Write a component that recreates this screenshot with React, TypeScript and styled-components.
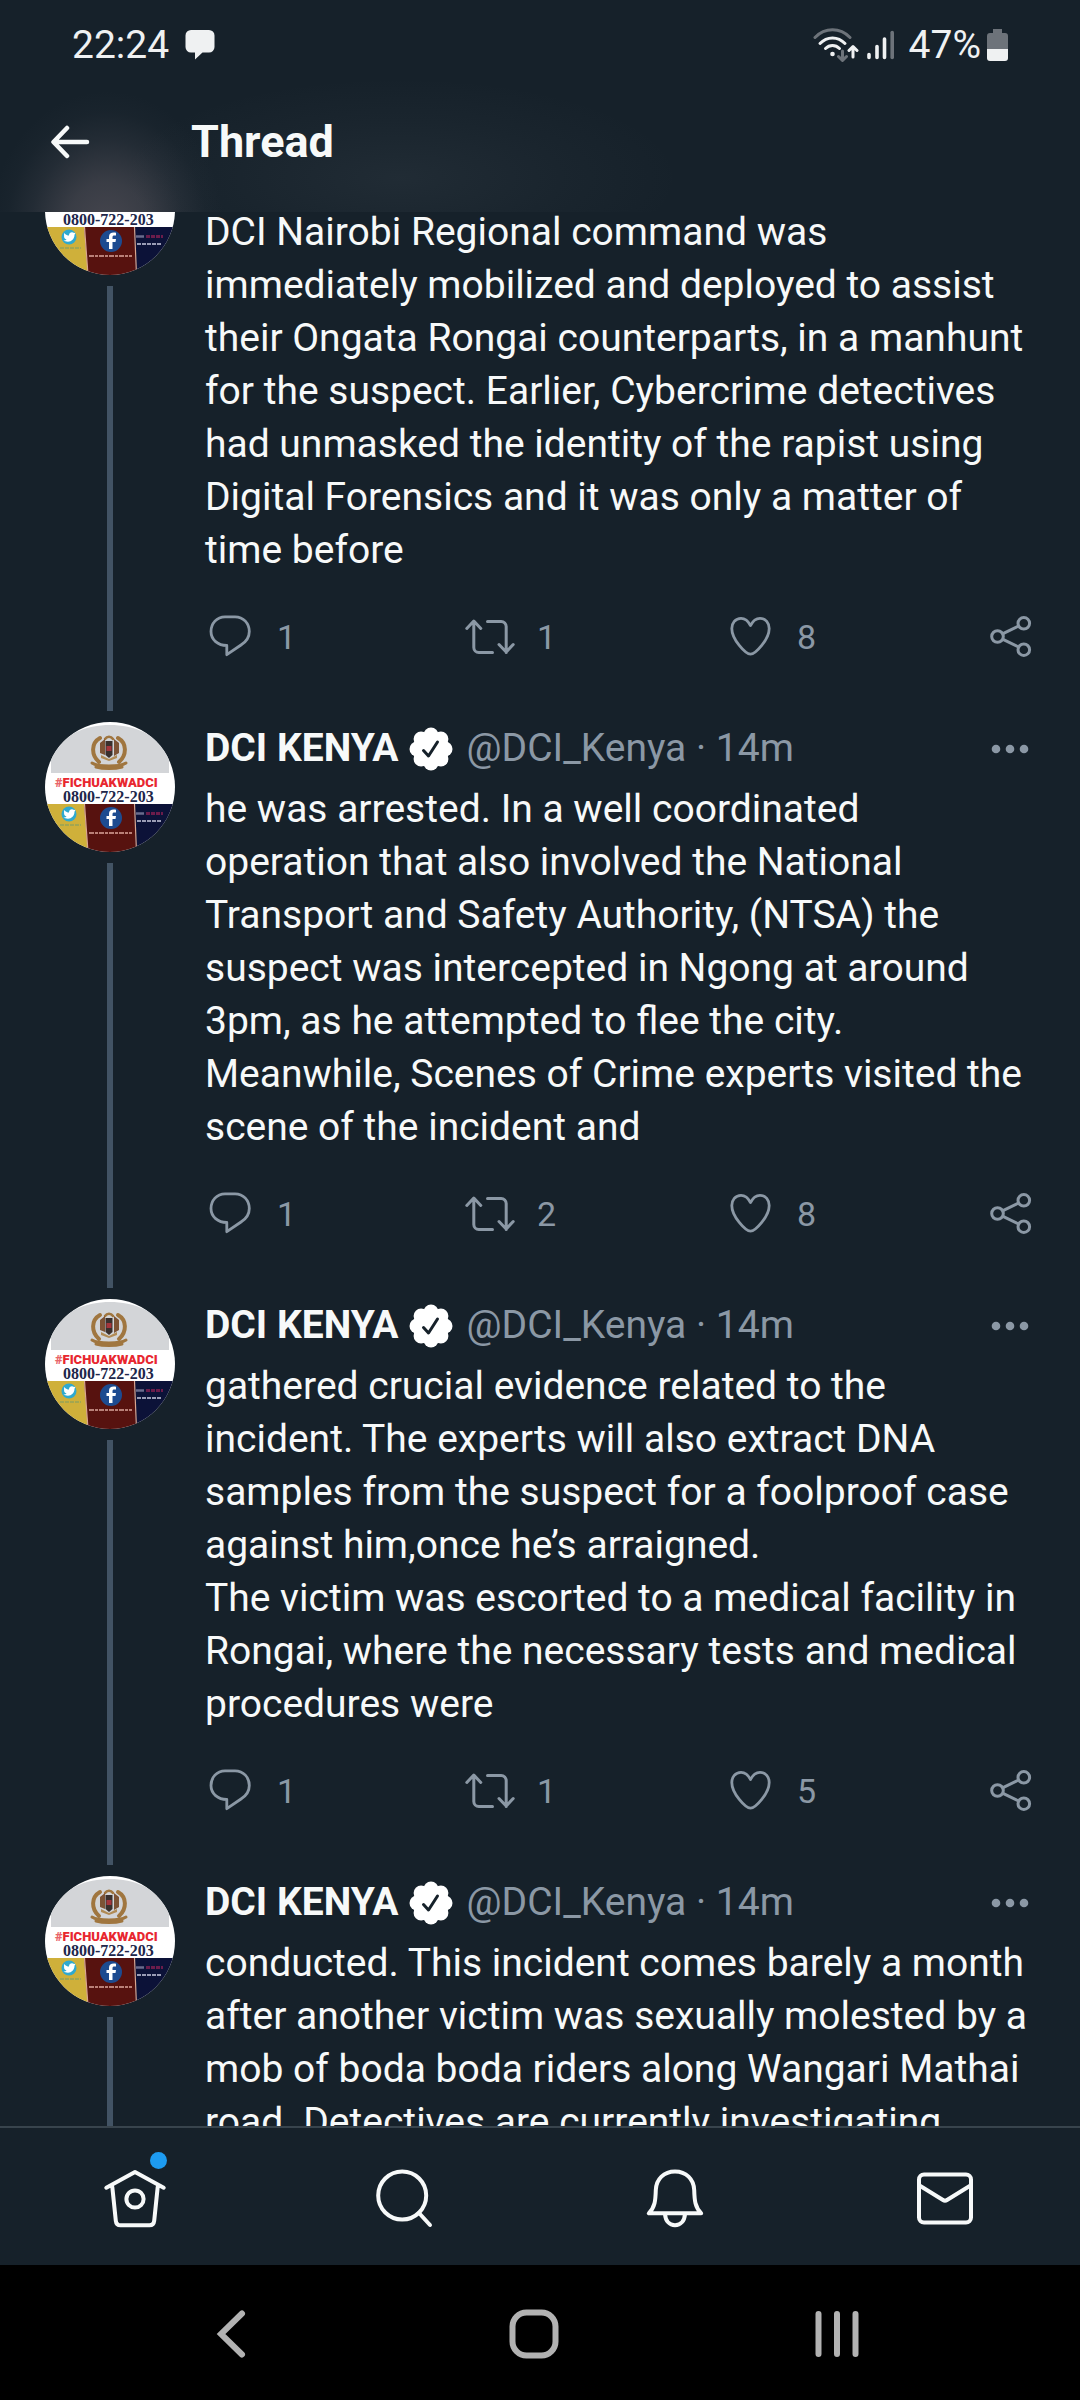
import React from "react";
import styled, { createGlobalStyle } from "styled-components";

const color = {
  bg: "#16212a",
  text: "#f7f9f9",
  muted: "#8b98a5",
  rail: "#425364",
  border: "#38444d",
  accent: "#1d9bf0",
  system: "#b2b2b2",
};

const GlobalStyle = createGlobalStyle`
  * { box-sizing: border-box; }
  body {
    margin: 0;
    background: ${color.bg};
    color: ${color.text};
    font-family: Roboto, "Noto Sans", sans-serif;
  }
  button { margin: 0; padding: 0; border: 0; background: none; color: inherit; font: inherit; cursor: pointer; }
  svg { display: block; flex: none; }
`;

const Screen = styled.div`
  display: flex;
  flex-direction: column;
  height: 100vh;
  overflow: hidden;
`;

const StatusBar = styled.div`
  display: flex;
  align-items: center;
  justify-content: space-between;
  flex: none;
  height: 73px;
  padding: 16px 72px 0;
  color: #eff1f2;
  font-size: 39px;
  line-height: 56px;
`;

const StatusGroup = styled.div<{ $gap: number }>`
  display: flex;
  align-items: center;
  gap: ${(p) => p.$gap}px;
`;

const Header = styled.header`
  display: flex;
  align-items: center;
  gap: 96px;
  flex: none;
  height: 139px;
  padding: 0 45px 2px;
  background:
    radial-gradient(
      ellipse 118px 140px at 107px 158px,
      rgba(125, 112, 120, 0.48),
      rgba(120, 110, 118, 0.36) 35%,
      rgba(110, 105, 115, 0.15) 65%,
      rgba(100, 100, 110, 0.04) 85%,
      transparent
    ),
    radial-gradient(ellipse 280px 100px at 400px 105px, rgba(140, 150, 160, 0.09), rgba(140, 150, 160, 0.03) 60%, transparent),
    ${color.bg};
`;

const Title = styled.h1`
  margin: 0;
  font-size: 45px;
  line-height: 56px;
  font-weight: 700;
`;

const Feed = styled.main`
  flex: 1;
  min-height: 0;
  overflow: hidden;
`;

/* The list is scrolled part of the way into its first post. */
const Posts = styled.div`
  margin-top: -78px;
`;

const Post = styled.article`
  display: flex;
  gap: 30px;
  padding: 11px 45px 0;
`;

const Side = styled.div`
  display: flex;
  flex-direction: column;
  align-items: center;
  gap: 11px;
  flex: none;
  width: 130px;
`;

const Rail = styled.div`
  flex: 1;
  width: 6px;
  background: ${color.rail};
`;

const Content = styled.div`
  flex: 1;
  min-width: 0;
`;

const Byline = styled.div`
  display: flex;
  align-items: center;
  height: 53px;
  font-size: 39px;
  line-height: 53px;
  white-space: nowrap;
`;

const Name = styled.span`
  font-weight: 700;
  margin-right: 10px;
`;

const Handle = styled.span`
  flex: 1;
  margin-left: 14px;
  color: ${color.muted};
`;

const IconButton = styled.button`
  display: flex;
  align-items: center;
  justify-content: center;
  flex: none;
  width: 50px;
  height: 50px;
`;

const MutedIconButton = styled(IconButton)`
  color: ${color.muted};
`;

const Body = styled.p`
  margin: 8px 0 0;
  padding-right: 6px;
  font-size: 39px;
  line-height: 53px;
  white-space: pre-line;
`;

const Actions = styled.div`
  display: flex;
  margin-top: 34px;
  padding-bottom: 50px;
  color: ${color.muted};
`;

const Slot = styled.div`
  flex: 1;
`;

const Action = styled.button`
  display: flex;
  align-items: center;
  gap: 22px;
  height: 50px;
`;

const Count = styled.span`
  padding-top: 2px;
  font-size: 34px;
  line-height: 40px;
`;

const Tabs = styled.nav`
  display: grid;
  grid-template-columns: repeat(4, 1fr);
  flex: none;
  height: 139px;
  border-top: 2px solid ${color.border};
`;

const Tab = styled.button`
  display: flex;
  align-items: center;
  justify-content: center;
`;

const TabIcon = styled.span`
  position: relative;
`;

const Dot = styled.span`
  position: absolute;
  top: -9px;
  right: 4px;
  width: 17px;
  height: 17px;
  border-radius: 50%;
  background: ${color.accent};
`;

const SystemBar = styled.div`
  display: grid;
  grid-template-columns: repeat(3, 1fr);
  flex: none;
  height: 135px;
  padding: 0 92px 0 79px;
  background: #000;
  color: ${color.system};
`;

const line = {
  fill: "none",
  stroke: "currentColor",
  strokeLinecap: "round",
  strokeLinejoin: "round",
} as const;

const MessageIcon = () => (
  <svg width="30" height="30" viewBox="0 0 30 30" fill="currentColor">
    <path d="M6 0h18a5.500 5.500 0 0 1 5.500 5.500v11.500a5.500 5.500 0 0 1-5.500 5.500h-6.500L10 29.500v-7H6A5.500 5.500 0 0 1 .5 17V5.500A5.500 5.500 0 0 1 6 0z" />
  </svg>
);

const WifiIcon = () => (
  <svg width="46" height="34" viewBox="0 0 46 34" {...line} strokeWidth="3">
    <path d="M2 9.500C12-.7 27-.7 37 9.500" opacity=".4" />
    <path d="M7 15.500c7-7.500 18-7.500 25 0M12.500 20.500c4-4 10-4 14 0" />
    <circle cx="19.500" cy="26" r="2.300" fill="currentColor" stroke="none" />
    <path d="M29.500 23v9M25.500 28.500l4 4 4-4" opacity=".4" />
    <path d="M40 29V20M36 22.500l4-4 4 4" />
  </svg>
);

const SignalIcon = () => (
  <svg width="28" height="30" viewBox="0 0 28 30" {...line} strokeWidth="3.600">
    <path d="M2 24.500v3M10 16.500v11M17.500 9v18.500" />
    <path d="M25.200 2.500v25" opacity=".4" />
  </svg>
);

const BatteryIcon = () => (
  <svg width="21" height="32" viewBox="0 0 21 32" fill="currentColor">
    <path d="M6 0h9v4h3a3 3 0 0 1 3 3v13H0V7a3 3 0 0 1 3-3h3z" opacity=".4" />
    <path d="M0 20h21v9a3 3 0 0 1-3 3H3a3 3 0 0 1-3-3z" />
  </svg>
);

const BackIcon = () => (
  <svg width="40" height="34" viewBox="0 0 40 34" {...line} strokeWidth="4.500">
    <path d="M37 17H4M17 3L3.500 17 17 31" />
  </svg>
);

const VerifiedIcon = () => (
  <svg width="44" height="44" viewBox="0 0 44 44">
    <g fill="#fff">
      <circle cx="22" cy="22" r="17" />
      {[0, 45, 90, 135, 180, 225, 270, 315].map((a) => (
        <circle key={a} cx="22" cy="8" r="7.500" transform={`rotate(${a} 22 22)`} />
      ))}
    </g>
    <path d="M14.500 23.500l5 5.500 9-14" {...line} stroke={color.bg} strokeWidth="3" />
  </svg>
);

const MoreIcon = () => (
  <svg width="50" height="50" viewBox="0 0 50 50" fill="currentColor">
    <circle cx="11" cy="25" r="4.300" />
    <circle cx="25" cy="25" r="4.300" />
    <circle cx="39" cy="25" r="4.300" />
  </svg>
);

const ReplyIcon = () => (
  <svg width="50" height="50" viewBox="0 0 50 50" {...line} strokeWidth="2.800">
    <path d="M20 5.800h10c8.500 0 14.300 6.700 14.300 14.700 0 5.700-3 10.200-8.300 13.500L21.800 43.700V34.500c-8.800 0-15.800-5.800-15.800-14 0-8 5.800-14.700 14-14.700z" />
  </svg>
);

const RetweetIcon = () => (
  <svg width="50" height="50" viewBox="0 0 50 50" {...line} strokeWidth="3">
    <path d="M1.800 17.500L8.800 10l7 7.500M8.800 10.500v26a5 5 0 0 0 5 5H27.500" />
    <path d="M22.500 10.500h13.700a5 5 0 0 1 5 5v26M34 33.500l7.200 7.500 7-7.500" />
  </svg>
);

const LikeIcon = () => (
  <svg width="50" height="50" viewBox="0 0 50 50" {...line} strokeWidth="2.800">
    <path d="M25.500 14.500C23 9.500 19.800 7.300 16 7.300c-5.700 0-9.200 4.700-9.200 10.200 0 11 13.700 25.700 18.700 25.700s18.700-14.700 18.700-25.700c0-5.500-3.500-10.200-9.200-10.200-3.800 0-7 2.200-9.500 7.200z" />
  </svg>
);

const ShareIcon = () => (
  <svg width="50" height="50" viewBox="0 0 50 50" {...line} strokeWidth="3">
    <circle cx="12.500" cy="25.500" r="5.800" />
    <circle cx="38.800" cy="12.300" r="5.800" />
    <circle cx="38.800" cy="38.700" r="5.800" />
    <path d="M18 22.700l15.500-7.700M18 28.300l15.500 7.700" />
  </svg>
);

const tabIcon = { width: 72, height: 72, viewBox: "0 0 72 72", ...line, strokeWidth: 4 };

const HomeIcon = () => (
  <svg {...tabIcon}>
    <path d="M7.300 26.700L36 11l28.700 15.700M13.300 26l3.500 33.700c.3 3 2 4.600 4.700 4.600h29c2.700 0 4.400-1.600 4.700-4.600L58.700 26" />
    <circle cx="36" cy="38" r="8.600" />
  </svg>
);

const SearchIcon = () => (
  <svg {...tabIcon}>
    <circle cx="33.200" cy="34.500" r="24" />
    <path d="M50 52l11 12" />
  </svg>
);

const BellIcon = () => (
  <svg {...tabIcon}>
    <path d="M36 10.500c-11 0-18.800 7.500-19.200 18.500-.3 10.500-.8 17-7 23.300h52.400c-6.200-6.300-6.700-12.800-7-23.300C54.800 18 47 10.500 36 10.500z" />
    <path d="M26 53c.5 7 4.500 11.300 10 11.300S45.500 60 46 53" />
  </svg>
);

const MailIcon = () => (
  <svg {...tabIcon}>
    <rect x="10" y="13.500" width="52" height="48" rx="5" />
    <path d="M10.500 24.500L34 39q2 1.300 4 0l23.500-14.500" />
  </svg>
);

const systemIcon = { width: 60, height: 60, viewBox: "0 0 60 60", ...line, strokeWidth: 6 };

const SystemBack = () => (
  <svg {...systemIcon}>
    <path d="M41 10.500L20 31l21 20.500" strokeLinejoin="miter" />
  </svg>
);

const SystemHome = () => (
  <svg {...systemIcon}>
    <rect x="8.500" y="9.500" width="43" height="43" rx="14" />
  </svg>
);

const SystemRecents = () => (
  <svg {...systemIcon}>
    <path d="M11.500 11v40M30 11v40M48.500 11v40" />
  </svg>
);

const Avatar = ({ id, tagged }: { id: string; tagged: boolean }) => (
  <svg width="130" height="130" viewBox="0 0 130 130" role="img" aria-label="DCI Kenya">
    <clipPath id={id}>
      <circle cx="65" cy="65" r="65" />
    </clipPath>
    <g clipPath={`url(#${id})`}>
      <rect width="130" height="130" fill="#fff" />
      <path d="M6 51V36C15 12 42 3 65 3s50 9 59 33v15z" fill="#d3d5d8" />
      <g fill="none" stroke="#a0763f" strokeWidth="2.500" strokeLinecap="round">
        <path d="M55 16c-9 5-9 17-1 24M73 16c9 5 9 17 1 24" strokeWidth="4" />
        <path d="M47 41c6 4 28 4 34 0M51 45c7 2 19 2 26 0" strokeWidth="3" />
        <path d="M60 17c2-3 6-3 8 0" />
      </g>
      <path d="M55 21l5-4v16l-5-2zM69 17l5 4v10l-5 3z" fill="#7d5335" />
      <path d="M60.500 19h7v14l-3.500 3-3.500-3z" fill="#3a302d" />
      <path d="M61.500 24h5v5h-5z" fill="#a5353c" />
      <path d="M56 33l8 4 8-4v3l-8 3-8-3z" fill="#b18b55" />
      {tagged && (
        <text x="10" y="65" fill="#e8272f" fontFamily="Roboto, sans-serif" fontWeight="900" fontSize="13">
          <tspan fill="#e8656a">#</tspan>FICHUAKWADCI
        </text>
      )}
      <text x="18" y="80" fill="#20264a" fontFamily="Liberation Serif, serif" fontWeight="700" fontSize="16">
        0800-722-203
      </text>
      <path d="M0 82h39l4 48H0z" fill="#cfb03a" />
      <path d="M39 82h51l2 48H43z" fill="#57120f" />
      <path d="M89 82h41v48H91z" fill="#0c1238" />
      <path d="M39.500 82l3.500 48M89.500 82l2 48" stroke="#d9a58f" strokeWidth="1.200" />
      <circle cx="24" cy="92" r="7.500" fill="#2fa9cf" />
      <path d="M19 88c2 2 3.500 2.500 5 2.500 0-3 3-4 5-2.500l1.500-.3-1 2c0 4-3 7-6.500 7-2 0-3.500-.5-4.500-1.200 1.500 0 2.500-.3 3-1-1.500-.5-2.200-1.500-2.400-2.500z" fill="#fff" />
      <path d="M15 103h21" stroke="#a3a650" strokeWidth="2" strokeDasharray="4 1" />
      <circle cx="66" cy="96" r="11" fill="#1d4b90" />
      <path d="M67.500 104v-7h3l.5-3h-3.500v-2c0-1 .5-1.600 1.800-1.600H71v-2.700c-4.300-.7-7 .6-7 4V94h-2.500v3H64v7z" fill="#fff" />
      <path d="M44 111h43" stroke="#b98078" strokeWidth="2" strokeDasharray="5 1 3 1" />
      <path d="M91 91.500h8" stroke="#6a6c8c" strokeWidth="2.500" />
      <path d="M101 91.500h17" stroke="#6b1c4b" strokeWidth="3" strokeDasharray="4 1" />
      <path d="M92 99h24" stroke="#9a9cb5" strokeWidth="2" strokeDasharray="4 1" />
    </g>
  </svg>
);

type PostData = {
  text: string;
  counts?: { replies: number; retweets: number; likes: number };
};

const posts: PostData[] = [
  {
    text: "DCI Nairobi Regional command was immediately mobilized and deployed to assist their Ongata Rongai counterparts, in a manhunt for the suspect. Earlier, Cybercrime detectives had unmasked the identity of the rapist using Digital Forensics and it was only a matter of time before",
    counts: { replies: 1, retweets: 1, likes: 8 },
  },
  {
    text: "he was arrested. In a well coordinated operation that also involved the National Transport and Safety Authority, (NTSA) the suspect was intercepted in Ngong at around 3pm, as he attempted to flee the city.\nMeanwhile, Scenes of Crime experts visited the scene of the incident and",
    counts: { replies: 1, retweets: 2, likes: 8 },
  },
  {
    text: "gathered crucial evidence related to the incident. The experts will also extract DNA samples from the suspect for a foolproof case against him,once he’s arraigned.\nThe victim was escorted to a medical facility in Rongai, where the necessary tests and medical procedures were",
    counts: { replies: 1, retweets: 1, likes: 5 },
  },
  {
    text: "conducted. This incident comes barely a month after another victim was sexually molested by a mob of boda boda riders along Wangari Mathai road. Detectives are currently investigating",
  },
];

/* The top of the first post is scrolled away, so its byline keeps only its height. */
const PostRow = ({ post, index }: { post: PostData; index: number }) => (
  <Post>
    <Side>
      <Avatar id={`avatar-${index}`} tagged={index > 0} />
      <Rail />
    </Side>
    <Content>
      <Byline>
        {index > 0 && (
          <>
            <Name>DCI KENYA</Name>
            <VerifiedIcon />
            <Handle>@DCI_Kenya · 14m</Handle>
            <MutedIconButton aria-label="More">
              <MoreIcon />
            </MutedIconButton>
          </>
        )}
      </Byline>
      <Body>{post.text}</Body>
      {post.counts && (
        <Actions>
          <Slot>
            <Action aria-label="Reply">
              <ReplyIcon />
              <Count>{post.counts.replies}</Count>
            </Action>
          </Slot>
          <Slot>
            <Action aria-label="Retweet">
              <RetweetIcon />
              <Count>{post.counts.retweets}</Count>
            </Action>
          </Slot>
          <Slot>
            <Action aria-label="Like">
              <LikeIcon />
              <Count>{post.counts.likes}</Count>
            </Action>
          </Slot>
          <MutedIconButton aria-label="Share">
            <ShareIcon />
          </MutedIconButton>
        </Actions>
      )}
    </Content>
  </Post>
);

export default function App() {
  return (
    <Screen>
      <GlobalStyle />
      <StatusBar>
        <StatusGroup $gap={16}>
          <span>22:24</span>
          <MessageIcon />
        </StatusGroup>
        <StatusGroup $gap={14}>
          <StatusGroup $gap={8}>
            <WifiIcon />
            <SignalIcon />
          </StatusGroup>
          <StatusGroup $gap={6}>
            <span>47%</span>
            <BatteryIcon />
          </StatusGroup>
        </StatusGroup>
      </StatusBar>
      <Header>
        <IconButton aria-label="Back">
          <BackIcon />
        </IconButton>
        <Title>Thread</Title>
      </Header>
      <Feed>
        <Posts>
          {posts.map((post, i) => (
            <PostRow key={i} post={post} index={i} />
          ))}
        </Posts>
      </Feed>
      <Tabs aria-label="Main">
        <Tab aria-label="Home">
          <TabIcon>
            <HomeIcon />
            <Dot />
          </TabIcon>
        </Tab>
        <Tab aria-label="Search">
          <SearchIcon />
        </Tab>
        <Tab aria-label="Notifications">
          <BellIcon />
        </Tab>
        <Tab aria-label="Messages">
          <MailIcon />
        </Tab>
      </Tabs>
      <SystemBar>
        <Tab aria-label="System back">
          <SystemBack />
        </Tab>
        <Tab aria-label="System home">
          <SystemHome />
        </Tab>
        <Tab aria-label="Recent apps">
          <SystemRecents />
        </Tab>
      </SystemBar>
    </Screen>
  );
}
